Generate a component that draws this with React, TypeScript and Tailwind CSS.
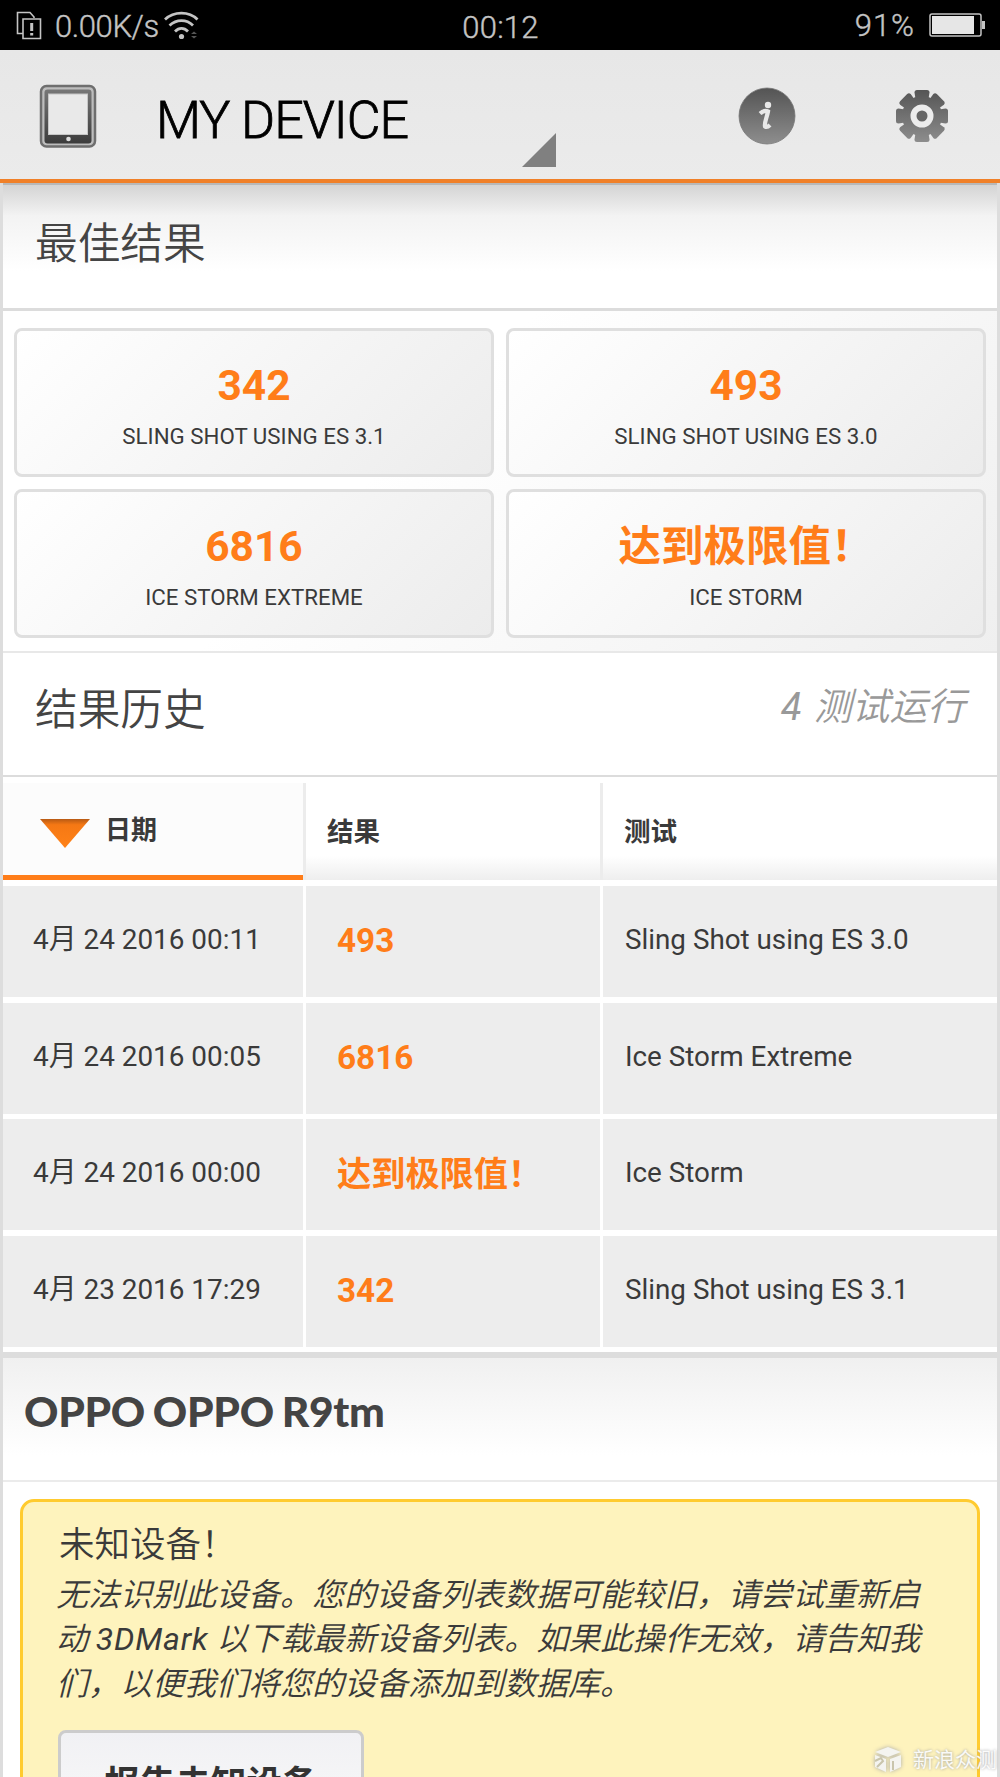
import React from "react";

interface BestResult {
  score: string;
  test: string;
}

interface HistoryEntry {
  date: string;
  result: string;
  test: string;
}

const bestResults: BestResult[] = [
  { score: "342", test: "SLING SHOT USING ES 3.1" },
  { score: "493", test: "SLING SHOT USING ES 3.0" },
  { score: "6816", test: "ICE STORM EXTREME" },
  { score: "达到极限值！", test: "ICE STORM" },
];

const history: HistoryEntry[] = [
  { date: "4月 24 2016 00:11", result: "493", test: "Sling Shot using ES 3.0" },
  { date: "4月 24 2016 00:05", result: "6816", test: "Ice Storm Extreme" },
  { date: "4月 24 2016 00:00", result: "达到极限值！", test: "Ice Storm" },
  { date: "4月 23 2016 17:29", result: "342", test: "Sling Shot using ES 3.1" },
];

// Chinese scores are set slightly larger than the numeric ones in the table
const isNumeric = (value: string) => /^\d+$/.test(value);

const StatusBar: React.FC = () => (
  <div className="flex h-[50px] items-center bg-black pr-[15px] pl-4 text-[#c4c4c4] [-webkit-text-stroke:0.4px_#c4c4c4]">
    <div className="flex flex-1 items-center">
      <svg width="26" height="30" viewBox="0 0 26 30" fill="none" stroke="#c4c4c4" strokeWidth="1.6">
        <path d="M7 23.500H1.500V2.500H14L18 7V8" />
        <path d="M7 9H24.500V28.500H7Z" />
        <path d="M15.700 13V21M15.700 23V25.500" strokeWidth="3" />
      </svg>
      <span className="mt-[3px] ml-[13px] w-[108px] text-[31px] leading-[47px] [font-weight:350] tracking-[-0.4px] whitespace-nowrap">
        0.00K/s
      </span>
      <svg width="36" height="30" viewBox="0 0 36 30" fill="none" stroke="#c4c4c4" strokeWidth="2.800">
        <path d="M2 9.500C11 1 26 1 34.500 9.500" />
        <path d="M6.500 15.500C13.500 9 23.500 9 30 15.500" />
        <path d="M12 21.500C16 17.500 21 17.500 25 21.500" />
        <circle cx="18.500" cy="26.500" r="2.600" fill="#c4c4c4" stroke="none" />
        <path d="M28 24L31 21.500L34 24ZM28 26L31 28.500L34 26Z" fill="#555" stroke="none" />
      </svg>
    </div>
    <span className="pt-[6px] text-[31px] leading-[44px] [font-weight:350] tracking-[0.2px]">00:12</span>
    <div className="flex flex-1 items-center justify-end">
      <span className="mt-[2px] mr-[14px] text-[31px] leading-[48px] [font-weight:350] tracking-[1px]">91%</span>
      <svg width="56" height="24" viewBox="0 0 56 24">
        <rect x="1" y="1" width="51" height="22" rx="2" fill="none" stroke="#c4c4c4" strokeWidth="1.500" />
        <rect x="3" y="3" width="42" height="18" fill="#e6e6e6" />
        <path d="M53 8H56V16H53Z" fill="#c4c4c4" />
      </svg>
    </div>
  </div>
);

const TabletIcon = () => (
  <svg width="58" height="64" viewBox="0 0 58 64">
    <defs>
      <linearGradient id="tablet" x1="0" y1="0" x2="0" y2="1">
        <stop offset="0" stopColor="#777" />
        <stop offset="1" stopColor="#3c3c3c" />
      </linearGradient>
    </defs>
    <rect x="2" y="2" width="54" height="60.500" rx="5.500" fill="#bdbdbd" stroke="#6e6e6e" strokeWidth="2.500" />
    <rect x="5.500" y="5.500" width="47" height="54" rx="3" fill="url(#tablet)" />
    <rect x="9.500" y="10" width="39" height="40.500" fill="#e9e9e9" stroke="#c6c6c6" />
    <circle cx="29.500" cy="55" r="2.300" fill="#ddd" />
  </svg>
);

const InfoIcon = () => (
  <svg width="58" height="58" viewBox="0 0 58 58">
    <defs>
      <linearGradient id="info" x1="0" y1="0" x2="0" y2="1">
        <stop offset="0" stopColor="#545454" />
        <stop offset="1" stopColor="#8e8e8e" />
      </linearGradient>
    </defs>
    <circle cx="29" cy="29" r="28" fill="url(#info)" stroke="#777" strokeWidth="0.800" />
    <circle cx="30" cy="18" r="3.200" fill="#e8e8e8" />
    <path d="M22 26.500C25 24 28 23.500 30 24.500C29 30 26 36 27 39.500C28.500 40.500 30.500 39.500 32 38" fill="none" stroke="#e8e8e8" strokeWidth="4.200" />
  </svg>
);

const teeth = [0, 45, 90, 135, 180, 225, 270, 315];

const GearIcon = () => (
  <svg width="54" height="54" viewBox="0 0 54 54">
    <defs>
      <linearGradient id="gear" gradientUnits="userSpaceOnUse" x1="0" y1="0" x2="0" y2="54">
        <stop offset="0" stopColor="#545454" />
        <stop offset="1" stopColor="#8e8e8e" />
      </linearGradient>
      <mask id="gear-shape">
        <circle cx="27" cy="27" r="20" fill="#fff" />
        {teeth.map((angle) => (
          <path
            key={angle}
            d="M20.500 10L19.500 3.500Q19.500 1 22 1H32Q34.500 1 34.500 3.500L33.500 10Z"
            fill="#fff"
            transform={`rotate(${angle} 27 27)`}
          />
        ))}
      </mask>
    </defs>
    <rect width="54" height="54" fill="url(#gear)" mask="url(#gear-shape)" />
    <circle cx="27" cy="27" r="8.500" fill="#666" stroke="#ececec" strokeWidth="6" />
  </svg>
);

const Header: React.FC = () => (
  <header className="flex h-[133px] items-start border-b-4 border-[#f08028] bg-linear-to-b from-[#e7e7e7] to-[#ebebeb]">
    <div className="mt-[34px] ml-[39px]">
      <TabletIcon />
    </div>
    <h1 className="mt-[41px] ml-[59px] w-[366px] text-[52px] leading-[60px] [font-weight:350] tracking-[-1px] text-black [-webkit-text-stroke:0.8px_#000]">
      MY DEVICE
    </h1>
    <svg className="mt-[83px]" width="34" height="34" viewBox="0 0 34 34">
      <path d="M34 0V34H0Z" fill="#808080" />
    </svg>
    <div className="mt-[37px] ml-[182px]">
      <InfoIcon />
    </div>
    <div className="mt-[39px] ml-[99px]">
      <GearIcon />
    </div>
  </header>
);

const ResultCard: React.FC<{ item: BestResult }> = ({ item }) => (
  <div className="flex h-[149px] flex-col items-center rounded-[8px] border-3 border-[#dfdfdf] bg-linear-[135deg] from-white to-[#ececec] pt-[30px]">
    <div className="h-[50px] text-[42.500px] leading-[50px] font-bold text-[#ff7d19]">{item.score}</div>
    <div className="mt-[11px] text-[22.300px] leading-[28px] text-[#3a3a3a]">{item.test}</div>
  </div>
);

const Watermark = () => (
  <div className="absolute right-[3px] bottom-[2px] flex items-center gap-[10px] text-[21px] leading-[30px] whitespace-nowrap text-white/90 [text-shadow:0_0_3px_#999]">
    <svg width="30" height="28" viewBox="0 0 30 28" className="[filter:drop-shadow(0_0_2px_#aaa)]">
      <path d="M15 1L28 6L15 11L2 6Z" fill="#f4f4f0" />
      <path d="M2 9L13 13V26L2 21Z" fill="#f4f4f0" />
      <path d="M28 9L17 13V26L28 21Z" fill="#f4f4f0" />
      <path d="M2 15L8 12L10 15L4 21M20 15V24" fill="none" stroke="#c9c5ac" strokeWidth="2" />
    </svg>
    新浪众测
  </div>
);

const App: React.FC = () => {
  return (
    <div className="relative h-[1777px] w-[1000px] overflow-hidden bg-white font-[Roboto,'Noto_Sans_CJK_SC',sans-serif] text-[#3a3a3a]">
      <StatusBar />
      <Header />

      <main className="border-x-3 border-[#dddddd]">
        {/* Best results */}
        <section>
          <div className="h-[128px] border-t-2 border-b-3 border-t-[#b8b8b8] border-b-[#dcdcdc] bg-linear-to-b from-[#d4d4d4] via-[#f3f3f3] via-25% to-white to-70% pt-[29px] pl-[32px]">
            <h2 className="text-[42.700px] leading-[60px] [font-weight:350] text-[#444]">最佳结果</h2>
          </div>
          <div className="grid h-[342px] grid-cols-2 content-start gap-3 border-b-2 border-[#e8e8e8] bg-linear-[135deg] from-white from-40% to-[#efefef] pt-[17px] pr-[11px] pl-[11px]">
            {bestResults.map((item) => (
              <ResultCard key={item.test} item={item} />
            ))}
          </div>
        </section>

        {/* Result history */}
        <section>
          <div className="flex h-[124px] justify-between border-b-2 border-[#dcdcdc] pt-[27px] pr-[32px] pl-[32px]">
            <h2 className="text-[42.700px] leading-[60px] [font-weight:350] text-[#444]">结果历史</h2>
            <span className="text-[37.800px] leading-[54px] [font-weight:350] [word-spacing:3px] text-[#999] italic">
              <span className="font-normal">4</span> 测试运行
            </span>
          </div>

          <div className="mt-[6px] grid h-[97px] grid-cols-[300px_297px_397px] text-[26.500px] font-bold">
            <div className="flex border-b-[5px] border-[#ff7d19] bg-[#fcfcfc] pl-[37px]">
              <svg className="mt-[36px]" width="50" height="29" viewBox="0 0 50 29">
                <defs>
                  <linearGradient id="sort" x1="0" y1="0" x2="0" y2="1">
                    <stop offset="0" stopColor="#b85a14" />
                    <stop offset="0.200" stopColor="#f57814" />
                    <stop offset="1" stopColor="#ff8218" />
                  </linearGradient>
                </defs>
                <path d="M0 0H50L25 29Z" fill="url(#sort)" />
              </svg>
              <span className="mt-[27px] ml-[15px] text-[26px] leading-[40px]">日期</span>
            </div>
            <div className="border-l-3 border-[#ececec] bg-linear-to-b from-white from-75% to-[#eeeeee] pt-[29px] pl-[21px] leading-[40px]">
              结果
            </div>
            <div className="border-l-3 border-[#ececec] bg-linear-to-b from-white from-75% to-[#eeeeee] pt-[29px] pl-[21px] leading-[40px]">
              测试
            </div>
          </div>

          <div className="mt-[6px] mb-[5.500px] flex flex-col gap-[5.500px]">
            {history.map((entry) => (
              <div
                key={entry.date}
                className="grid h-[111px] grid-cols-[300px_294px_394px] gap-x-[3px] text-[28px] leading-[108px]"
              >
                <div className="bg-[#ededed] pl-[30px] text-[27.900px] whitespace-nowrap">{entry.date}</div>
                <div
                  className={`bg-[#ededed] pl-[31px] leading-[110px] font-bold text-[#ff7d19] ${
                    isNumeric(entry.result) ? "text-[33.300px]" : "text-[34.200px]"
                  }`}
                >
                  {entry.result}
                </div>
                <div className="bg-[#ededed] pl-[22px] text-[27.800px]">{entry.test}</div>
              </div>
            ))}
          </div>
        </section>

        {/* Device */}
        <section>
          <div className="h-[130px] border-t-6 border-b-2 border-t-[#dddddd] border-b-[#ebebeb] bg-linear-to-b from-[#f0f0f0] to-white to-80% pt-[28px] pl-[21px]">
            <h2 className="font-[Lato,sans-serif] text-[42.500px] leading-[50px] font-black tracking-[-0.3px] [word-spacing:-2px] text-[#444]">
              OPPO OPPO R9tm
            </h2>
          </div>

          <div className="mx-[17px] mt-[17px] h-[400px] rounded-[14px] border-3 border-[#ffcb2f] bg-[#fef3bd] pt-[18px] pl-[35px]">
            <h3 className="pl-px text-[35.500px] leading-[50px] [font-weight:350]">未知设备！</h3>
            <div className="mt-[3px] -ml-[2px] text-[32px] leading-[44.300px] [font-weight:350] whitespace-nowrap italic">
              <p>无法识别此设备。您的设备列表数据可能较旧，请尝试重新启</p>
              <p>
                动 <span className="font-normal tracking-[0.8px]">3DMark</span> 以下载最新设备列表。如果此操作无效，请告知我
              </p>
              <p>们，以便我们将您的设备添加到数据库。</p>
            </div>
            <button className="mt-[24px] h-[110px] w-[306px] rounded-[8px] border-3 border-[#cccccc] bg-linear-to-b from-[#f1f1f4] to-[#fafafa] text-[35.500px] font-bold text-[#333]">
              报告未知设备
            </button>
          </div>
        </section>
      </main>

      <Watermark />
    </div>
  );
};

export default App;
